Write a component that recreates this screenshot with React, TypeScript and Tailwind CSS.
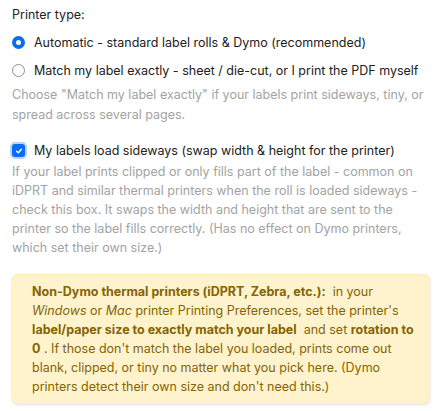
import React from "react";

export default function App() {
  return (
    <div
      className="w-[442px] min-h-[411px] bg-white px-3 pt-[5px] text-[12.5px] leading-[19px] text-[#222]"
      style={{ fontFamily: "Inter, 'Noto Sans', sans-serif" }}
    >
      <div className="mb-[9px]">Printer type:</div>

      {/* radios */}
      <label className="flex items-center gap-[9px] h-[19px] mb-[9px]">
        <span className="w-[13px] h-[13px] rounded-full bg-[#0b6cf0] flex items-center justify-center">
          <span className="w-[5px] h-[5px] rounded-full bg-white" />
        </span>
        <span>Automatic - standard label rolls &amp; Dymo (recommended)</span>
      </label>
      <label className="flex items-center gap-[9px] h-[19px] mb-[5px]">
        <span className="w-[13px] h-[13px] rounded-full border border-[#8f8f8f] bg-white" />
        <span className="whitespace-nowrap">Match my label exactly - sheet / die-cut, or I print the PDF myself</span>
      </label>
      <p className="text-[#a3a3a3] leading-[20px] mb-[16px]">
        Choose "Match my label exactly" if your labels print sideways, tiny, or spread across several pages.
      </p>

      {/* checkbox */}
      <label className="flex items-center gap-[9px] h-[19px] mb-[2px]">
        <span className="w-[13px] h-[13px] rounded-[3px] bg-[#0b6cf0] flex items-center justify-center ring-[2px] ring-[#b9d3fb]">
          <svg viewBox="0 0 10 10" className="w-[8px] h-[8px]">
            <path d="M2 5.2 L4.2 7.2 L8 2.8" stroke="white" strokeWidth="1.8" fill="none" strokeLinecap="round" strokeLinejoin="round" />
          </svg>
        </span>
        <span>My labels load sideways (swap width &amp; height for the printer)</span>
      </label>
      <p className="text-[#a3a3a3] mb-[17px] pr-[4px]">
        If your label prints clipped or only fills part of the label - common on iDPRT and similar thermal printers when the roll is loaded sideways - check this box. It swaps the width and height that are sent to the printer so the label fills correctly. (Has no effect on Dymo printers, which set their own size.)
      </p>

      {/* notice */}
      <div className="bg-[#fff3cd] border border-[#ffeeba] rounded-md shadow-[0_1px_3px_rgba(0,0,0,0.12)] pl-[19px] pr-3 py-[7px] text-[#856404]">
        <strong className="font-bold">Non-Dymo thermal printers (iDPRT, Zebra, etc.):</strong>&nbsp; in your{" "}
        <em>Windows</em> or <em>Mac</em> printer Printing Preferences, set the printer's{" "}
        <strong className="font-bold">label/paper size to exactly match your label</strong>&nbsp; and set{" "}
        <strong className="font-bold">rotation to 0</strong> . If those don't match the label you loaded, prints come out blank, clipped, or tiny no matter what you pick here. (Dymo printers detect their own size and don't need this.)
      </div>
    </div>
  );
}
